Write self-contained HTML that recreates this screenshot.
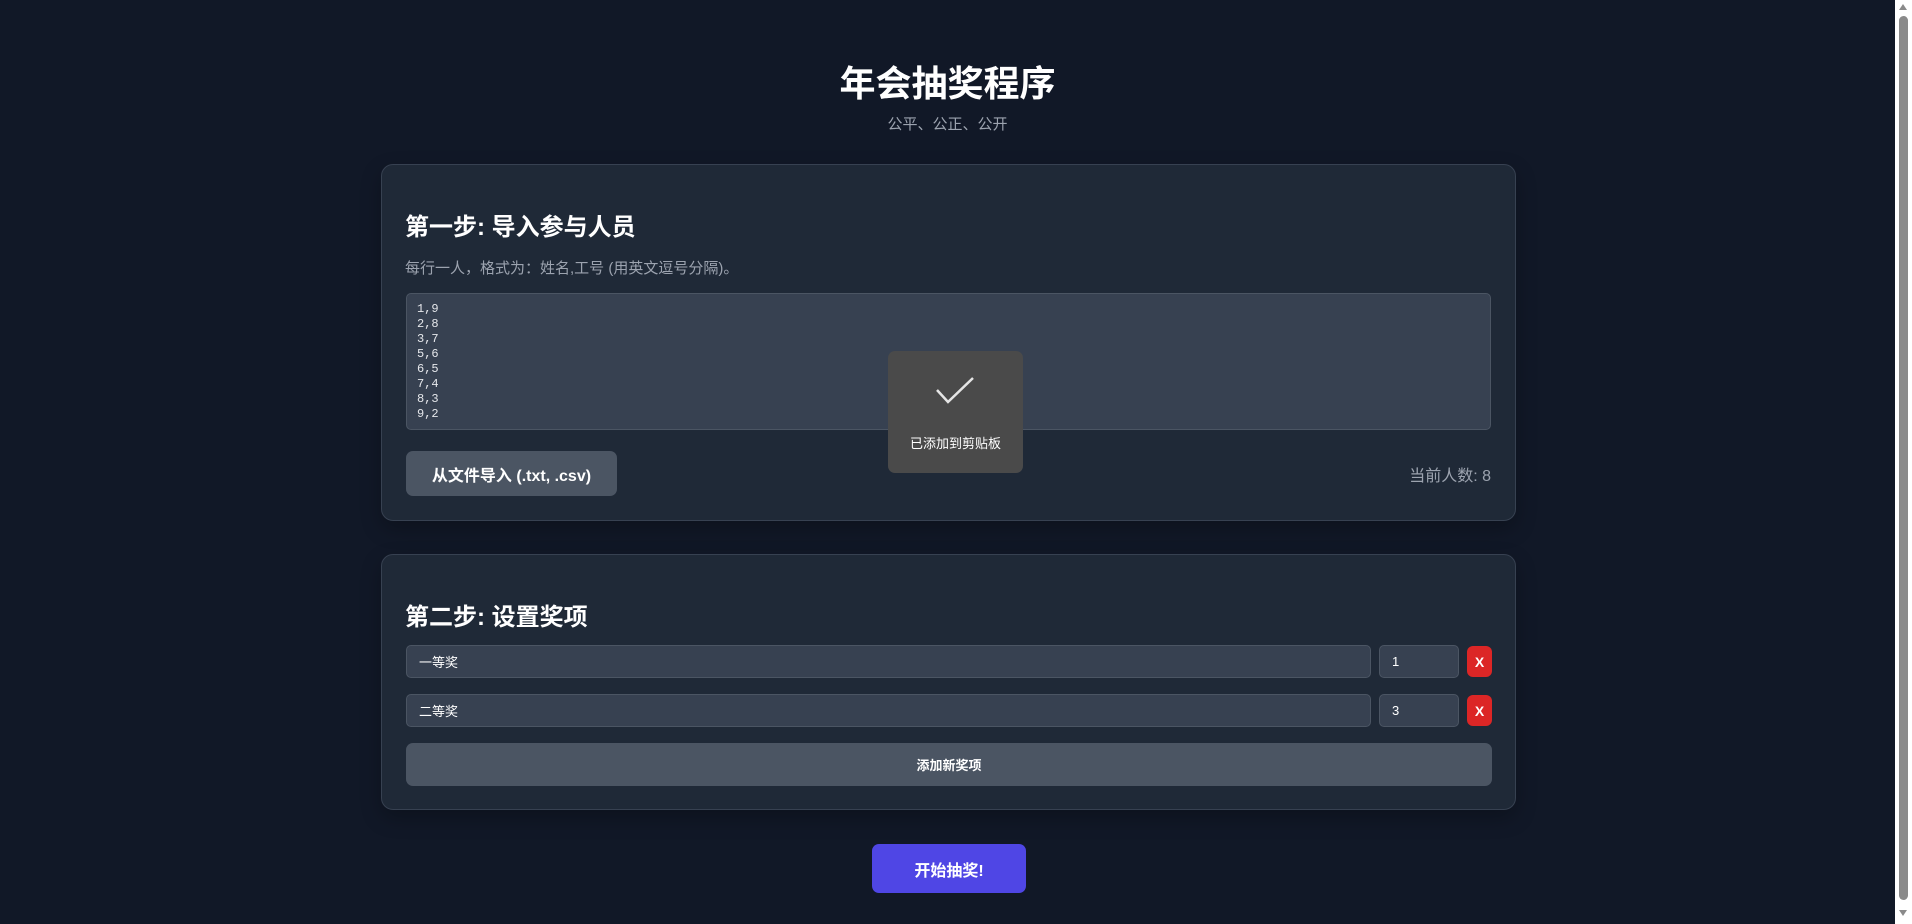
<!DOCTYPE html>
<html><head><meta charset="utf-8"><style>
*{box-sizing:border-box;margin:0;padding:0}
body{width:1912px;height:924px;background:#111827;font-family:"Liberation Sans","Noto Sans CJK SC",sans-serif;color:#fff;position:relative;overflow:hidden}
.abs{position:absolute}
h1{position:absolute;left:0;width:1895px;text-align:center;top:55px;font-size:36px;font-weight:bold}
.sub{left:0;width:1895px;text-align:center;top:113px;font-size:15px;color:#9ca3af}
.card{left:381px;width:1135px;background:#1f2937;border:1px solid #374151;border-radius:12px;box-shadow:0 8px 20px rgba(0,0,0,.25)}
h2{position:absolute;font-size:24px;font-weight:bold;left:405px}
.inp{background:#374151;border:1px solid #4b5563;border-radius:5px;font-size:13px;padding-left:12px;display:flex;align-items:center}
</style></head><body>
<h1>年会抽奖程序</h1>
<div class="abs sub">公平、公正、公开</div>

<div class="abs card" style="top:164px;height:357px"></div>
<h2 style="top:207px">第一步: 导入参与人员</h2>
<div class="abs" style="left:405px;top:257px;font-size:15px;color:#9ca3af">每行一人，格式为：姓名,工号 (用英文逗号分隔)。</div>
<div class="abs" style="left:406px;top:293px;width:1085px;height:137px;background:#374151;border:1px solid #4b5563;border-radius:5px;font-family:'Liberation Mono',monospace;font-size:12px;line-height:15px;padding:8px 10px;color:#e5e7eb">1,9<br>2,8<br>3,7<br>5,6<br>6,5<br>7,4<br>8,3<br>9,2</div>
<div class="abs" style="left:406px;top:451px;width:211px;height:45px;background:#4b5563;border-radius:7px;font-weight:bold;font-size:16px;display:flex;align-items:center;justify-content:center">从文件导入 (.txt, .csv)</div>
<div class="abs" style="right:421px;top:462px;font-size:16px;color:#9ca3af">当前人数: 8</div>

<div class="abs" style="left:888px;top:351px;width:135px;height:122px;background:#4a4a4a;border-radius:7px">
<svg class="abs" style="left:45px;top:24px" width="44" height="30" viewBox="0 0 44 30"><path d="M4 15 L15 27 L40 3" fill="none" stroke="#e5e5e5" stroke-width="2.5"/></svg>
<div class="abs" style="left:0;width:135px;text-align:center;top:82px;font-size:13px;color:#fff">已添加到剪贴板</div>
</div>

<div class="abs card" style="top:554px;height:256px"></div>
<h2 style="top:597px">第二步: 设置奖项</h2>
<div class="abs inp" style="left:406px;top:645px;width:965px;height:33px">一等奖</div>
<div class="abs inp" style="left:1379px;top:645px;width:80px;height:33px">1</div>
<div class="abs" style="left:1467px;top:646px;width:25px;height:31px;background:#dc2626;border-radius:6px;font-weight:bold;font-size:14px;display:flex;align-items:center;justify-content:center">X</div>
<div class="abs inp" style="left:406px;top:694px;width:965px;height:33px">二等奖</div>
<div class="abs inp" style="left:1379px;top:694px;width:80px;height:33px">3</div>
<div class="abs" style="left:1467px;top:695px;width:25px;height:31px;background:#dc2626;border-radius:6px;font-weight:bold;font-size:14px;display:flex;align-items:center;justify-content:center">X</div>
<div class="abs" style="left:406px;top:743px;width:1086px;height:43px;background:#4b5563;border-radius:7px;font-weight:bold;font-size:13px;display:flex;align-items:center;justify-content:center">添加新奖项</div>

<div class="abs" style="left:872px;top:844px;width:154px;height:49px;background:#4f46e5;border-radius:7px;font-weight:bold;font-size:16px;display:flex;align-items:center;justify-content:center">开始抽奖!</div>

<div class="abs" style="left:1895px;top:0;width:17px;height:924px;background:#fff">
<div class="abs" style="left:4px;top:4px;width:0;height:0;border-left:4px solid transparent;border-right:4px solid transparent;border-bottom:6px solid #8a8a8a"></div>
<div class="abs" style="left:4px;top:16px;width:9px;height:884px;background:#8a8a8a;border-radius:5px"></div>
<div class="abs" style="left:4px;top:910px;width:0;height:0;border-left:4px solid transparent;border-right:4px solid transparent;border-top:6px solid #8a8a8a"></div>
</div>
</body></html>
